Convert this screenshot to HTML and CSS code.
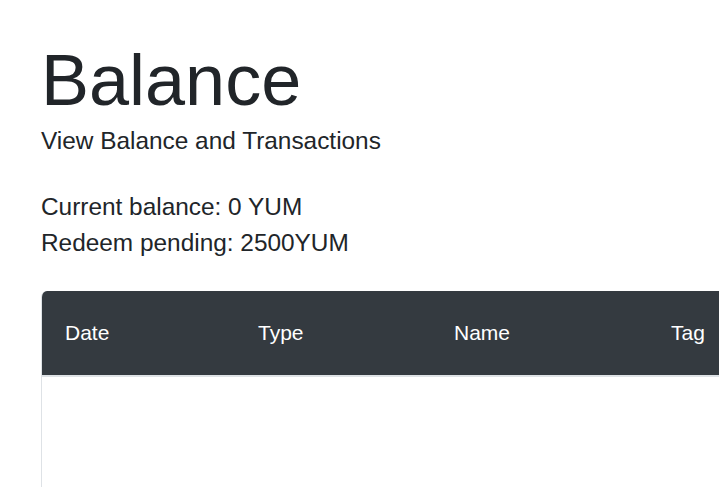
FILE: index.html
```html
<!DOCTYPE html>
<html lang="en">
<head>
<meta charset="utf-8">
<title>Balance</title>
<link rel="stylesheet" href="styles.css">
</head>
<body>
<main class="page">
  <h1 class="title">Balance</h1>
  <p class="lead">View Balance and Transactions</p>
  <div class="summary">
    <div>Current balance: 0 YUM</div>
    <div>Redeem pending: 2500YUM</div>
  </div>
  <div class="table-card">
    <table class="tx-table">
      <colgroup>
        <col class="c-date">
        <col class="c-type">
        <col class="c-name">
        <col class="c-tag">
      </colgroup>
      <thead>
        <tr>
          <th>Date</th>
          <th>Type</th>
          <th>Name</th>
          <th>Tag</th>
        </tr>
      </thead>
      <tbody></tbody>
    </table>
  </div>
</main>
</body>
</html>
```

FILE: styles.css
```css
html, body {
  margin: 0;
  padding: 0;
  overflow: hidden;
  background: #ffffff;
}

body {
  font-family: "Liberation Sans", Arial, sans-serif;
  color: #212529;
}

.page {
  padding: 37px 0 0 41px;
}

.title {
  margin: 0;
  font-size: 72px;
  font-weight: 400;
  line-height: 1.2;
}

.lead {
  margin: 0;
  font-size: 24.4px;
  line-height: 36px;
}

.summary {
  margin-top: 30px;
  font-size: 24.4px;
  line-height: 36px;
}

.table-card {
  margin-top: 30px;
  width: 900px;
  min-height: 220px;
  border-left: 1px solid #dee2e6;
  border-top-left-radius: 6px;
  overflow: hidden;
}

.tx-table {
  border-collapse: collapse;
  width: 900px;
  table-layout: fixed;
}

.c-date { width: 193px; }
.c-type { width: 196px; }
.c-name { width: 217px; }

.tx-table th {
  background: #343a40;
  color: #ffffff;
  font-size: 21px;
  font-weight: 400;
  line-height: 32px;
  text-align: left;
  padding: 26px 12px 26px 23px;
  border-bottom: 2px solid #dee2e6;
}
```
